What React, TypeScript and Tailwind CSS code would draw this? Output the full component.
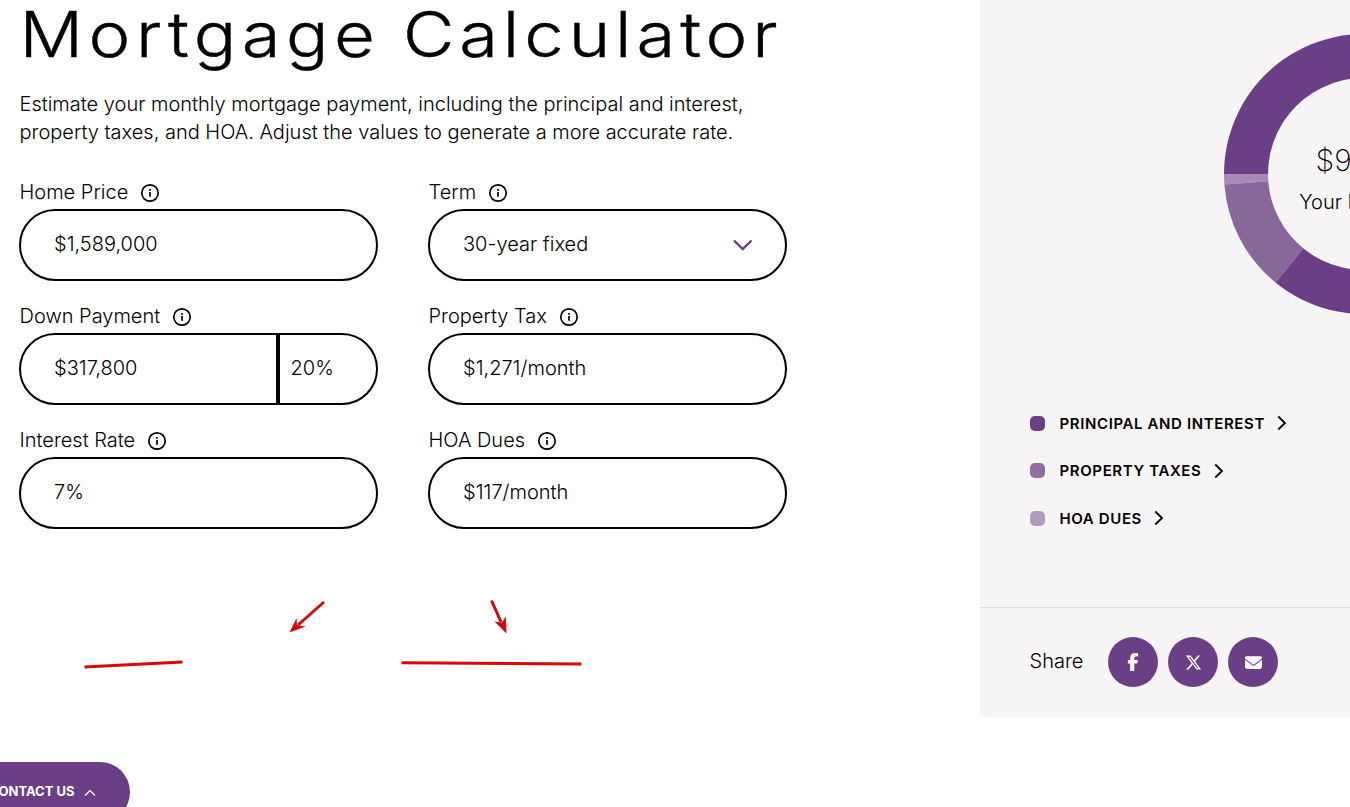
import { ReactNode } from "react";
import { FaFacebookF, FaXTwitter, FaEnvelope } from "react-icons/fa6";

type FieldProps = {
  label: string;
  children: ReactNode;
};

const legend = [
  { label: "Principal and Interest", color: "bg-[#6b3f86]" },
  { label: "Property Taxes", color: "bg-[#906ea3]" },
  { label: "HOA Dues", color: "bg-[#b29bc0]" },
];

const payments = [
  { name: "principal", value: 8457, color: "#6b3f86" },
  { name: "hoa", value: 117, color: "#a68bb5" },
  { name: "taxes", value: 1271, color: "#88689b" },
];

function InfoIcon() {
  return (
    <svg width="20" height="20" viewBox="0 0 20 20" fill="none" className="mt-[2px]">
      <circle cx="10" cy="10" r="8.2" stroke="#000" strokeWidth="1.7" />
      <path d="M10 9v4.800" stroke="#000" strokeWidth="1.7" />
      <path d="M10 6v1.7" stroke="#000" strokeWidth="1.7" />
    </svg>
  );
}

function Field({ label, children }: FieldProps) {
  return (
    <div className="h-[124px]">
      <div className="flex h-[34px] items-center gap-[12px] pl-[0.5px] text-xl font-light">
        <span>{label}</span>
        <InfoIcon />
      </div>
      <div className="flex h-[72px] items-center rounded-full border-2 border-black pl-[33px] text-xl font-light">
        {children}
      </div>
    </div>
  );
}

function point(angle: number, r: number) {
  return `${140 + r * Math.cos(angle)} ${140 + r * Math.sin(angle)}`;
}

function Donut() {
  const total = payments.reduce((sum, p) => sum + p.value, 0);
  const hoa = (117 / total) * 2 * Math.PI;
  const taxes = (1271 / total) * 2 * Math.PI;
  // slices run counter-clockwise from nine o'clock
  const a = Math.PI;
  const b = a - hoa;
  const c = b - taxes;
  const slice = (from: number, to: number, large: number) =>
    `M${point(from, 140)}A140 140 0 ${large} 0 ${point(to, 140)}L${point(to, 96)}A96 96 0 ${large} 1 ${point(from, 96)}Z`;

  return (
    <svg width="280" height="280" viewBox="0 0 280 280">
      <path d={slice(c, a - 2 * Math.PI, 1)} fill={payments[0].color} />
      <path d={slice(a, b, 0)} fill={payments[1].color} />
      <path d={slice(b, c, 0)} fill={payments[2].color} />
    </svg>
  );
}

function Annotations() {
  return (
    <svg width="960" height="100" viewBox="0 590 960 100" className="block">
      <g stroke="#d90808" strokeWidth="3" fill="none">
        <path d="M84.500 667 L182.500 662" />
        <path d="M401.500 662.800 L581.500 664" />
        <path d="M324 602 L298 625" />
        <path d="M491.500 600.500 L501 622" />
      </g>
      <g fill="#d90808">
        <path d="M289.500 632.500 L296.500 618 L297 625 L305.500 626.500 Z" />
        <path d="M506.500 633.500 L494.500 621.500 L502 622.500 L505.800 616.500 Z" />
      </g>
    </svg>
  );
}

export default function App() {
  return (
    <div className="relative flex h-[807px] w-full overflow-hidden bg-white font-['Inter',sans-serif] text-black">
      <main className="w-[980px] shrink-0">
        <h1 className="flex h-[90px] origin-left scale-x-112 items-start gap-[20px] pl-[17.500px] text-[63px] leading-[68px] font-light whitespace-nowrap [-webkit-text-stroke:0.4px_black]">
          <span className="tracking-[4.9px]">Mortgage</span>
          <span className="tracking-[4.4px]">Calculator</span>
        </h1>
        <p className="h-[85px] pl-[19.500px] text-xl leading-7 font-light whitespace-nowrap">
          Estimate your monthly mortgage payment, including the principal and interest,
          <br />
          property taxes, and HOA. Adjust the values to generate a more accurate rate.
        </p>

        <div className="ml-[19px] grid grid-cols-[359px_359px] gap-x-[50px]">
          <Field label="Home Price">
            <span className="mb-[2px]">$1,589,000</span>
          </Field>
          <Field label="Term">
            <span className="mb-[2px] flex-1">30-year fixed</span>
            <svg width="20" height="12" viewBox="0 0 20 12" fill="none" className="mr-[32px]">
              <path d="M1 1.500 L9.700 10 L18.500 1.500" stroke="#6b3f86" strokeWidth="2.400" />
            </svg>
          </Field>
          <Field label="Down Payment">
            <span className="mb-[2px] flex-1">$317,800</span>
            <span className="flex h-full w-[100px] items-center border-l-4 border-black pb-[2px] pl-[10.500px]">20%</span>
          </Field>
          <Field label="Property Tax">
            <span className="mb-[2px]">$1,271/month</span>
          </Field>
          <Field label="Interest Rate">
            <span className="mb-[2px]">7%</span>
          </Field>
          <Field label="HOA Dues">
            <span className="mb-[2px]">$117/month</span>
          </Field>
        </div>

        <div className="mt-[43px]">
          <Annotations />
        </div>
      </main>

      <aside className="flex h-[717px] w-[768px] shrink-0 flex-col rounded-b-[5px] bg-[#f6f4f5]">
        <div className="relative mt-[34px] ml-[244px] h-[280px] w-[280px]">
          <Donut />
          <div className="absolute inset-0 flex flex-col items-center pt-[105px] whitespace-nowrap">
            <span className="text-[30px] leading-[42px] font-extralight">$9,845</span>
            <span className="text-xl leading-[42px] font-light">Your Payment</span>
          </div>
        </div>

        <ul className="mt-[97px] ml-[50px] flex flex-col gap-[23.500px]">
          {legend.map((item) => (
            <li key={item.label} className="flex h-6 items-center text-[15px] font-semibold tracking-[0.62px] uppercase">
              <span className={`mr-[14.500px] h-[15px] w-[15px] rounded-[5px] ${item.color}`} />
              <span className="mt-[2px]">{item.label}</span>
              <svg width="10" height="16" viewBox="0 0 10 16" fill="none" className="ml-[12.500px]">
                <path d="M1.300 1.500 L8 8 L1.300 14.500" stroke="#000" strokeWidth="1.800" />
              </svg>
            </li>
          ))}
        </ul>

        <div className="mt-auto flex h-[110px] items-center border-t border-[#dcdadb] pb-[2px] pl-[50px]">
          <span className="-ml-[0.5px] mb-[2px] w-[78.500px] text-xl font-light">Share</span>
          <div className="flex gap-[10px] text-white">
            <button className="flex h-[50px] w-[50px] items-center justify-center rounded-full bg-[#6b3f86]">
              <FaFacebookF size={18} />
            </button>
            <button className="flex h-[50px] w-[50px] items-center justify-center rounded-full bg-[#6b3f86]">
              <FaXTwitter size={17} className="mt-px" />
            </button>
            <button className="flex h-[50px] w-[50px] items-center justify-center rounded-full bg-[#6b3f86]">
              <FaEnvelope size={17} className="mt-px" />
            </button>
          </div>
        </div>
      </aside>

      <button className="absolute -left-[45px] top-[762px] flex h-[60px] w-[175px] items-center justify-end rounded-full bg-[#6b3f86] pr-[34.500px] text-[13px] font-bold text-white">
        CONTACT US
        <svg width="12" height="8" viewBox="0 0 12 8" fill="none" className="mt-px ml-[9px]">
          <path d="M1 6.500 L6 1.500 L11 6.500" stroke="#fff" strokeWidth="1.200" />
        </svg>
      </button>
    </div>
  );
}
